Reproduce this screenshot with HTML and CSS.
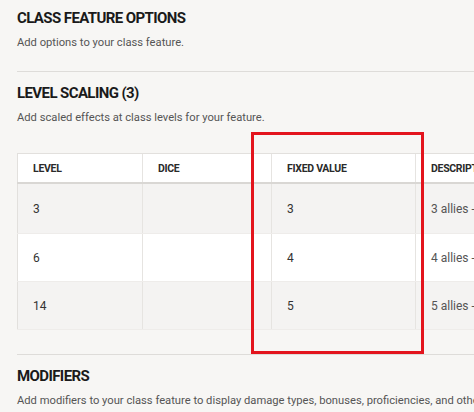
FILE: index.html
```html
<!DOCTYPE html>
<html>
<head>
<meta charset="utf-8">
<link rel="stylesheet" href="styles.css">
</head>
<body>
<div class="page">
  <section class="section first">
    <h2 class="title">CLASS FEATURE OPTIONS</h2>
    <p class="desc">Add options to your class feature.</p>
  </section>
  <section class="section scaling">
    <h2 class="title">LEVEL SCALING (3)</h2>
    <p class="desc">Add scaled effects at class levels for your feature.</p>
    <div class="table-wrap">
      <table class="grid">
        <thead>
          <tr>
            <th class="c1">LEVEL</th>
            <th class="c2">DICE</th>
            <th class="c3">FIXED VALUE</th>
            <th class="c4">DESCRIPTION</th>
          </tr>
        </thead>
        <tbody>
          <tr class="odd"><td>3</td><td></td><td>3</td><td>3 allies - within 30 feet</td></tr>
          <tr class="even"><td>6</td><td></td><td>4</td><td>4 allies - within 30 feet</td></tr>
          <tr class="odd"><td>14</td><td></td><td>5</td><td>5 allies - within 30 feet</td></tr>
        </tbody>
      </table>
      <div class="highlight"></div>
    </div>
  </section>
  <section class="section last">
    <h2 class="title">MODIFIERS</h2>
    <p class="desc">Add modifiers to your class feature to display damage types, bonuses, proficiencies, and other effects.</p>
  </section>
</div>
</body>
</html>
```
FILE: styles.css
```css
html, body {
  margin: 0;
  padding: 0;
}
body {
  background: #f7f6f4;
  font-family: Roboto, "Liberation Sans", sans-serif;
  color: #222;
  overflow: hidden;
  width: 474px;
  height: 412px;
}
.page {
  padding-left: 17px;
}
.section {
  border-bottom: 1px solid #dedcd9;
}
.section.first {
  padding-top: 8px;
  padding-bottom: 20px;
}
.section.scaling {
  padding-top: 11px;
  padding-bottom: 24px;
}
.section.last {
  padding-top: 11px;
  border-bottom: none;
}
.title {
  margin: 0;
  font-size: 15px;
  line-height: 20px;
  font-weight: 700;
  color: #1a1a1a;
  white-space: nowrap;
  letter-spacing: -0.6px;
}
.desc {
  margin: 7px 0 0 0;
  font-size: 11.2px;
  line-height: 16px;
  color: #555;
  white-space: nowrap;
}
.table-wrap {
  position: relative;
  margin-top: 27px;
}
.grid {
  border-collapse: collapse;
  width: 720px;
  table-layout: fixed;
  font-size: 12px;
  color: #333;
}
.grid th, .grid td {
  text-align: left;
  padding: 0 0 0 15px;
  border-left: 1px solid #e6e4e1;
  white-space: nowrap;
}
.grid th {
  background: #fff;
  height: 28px;
  font-size: 10.5px;
  font-weight: 700;
  letter-spacing: -0.3px;
  color: #2a2a2a;
  border-top: 1px solid #e2e0dd;
  border-bottom: 2px solid #d9d7d4;
}
.grid th:first-child, .grid td:first-child {
  border-left: 1px solid #e2e0dd;
}
.c1 { width: 109px; }
.c2 { width: 113px; }
.c3 { width: 128px; }
.c4 { width: 320px; }
.grid td {
  height: 47px;
  border-bottom: 1px solid #eeecea;
}
.grid tbody tr:first-child td {
  height: 49px;
}
.odd td { background: #f4f3f2; }
.even td { background: #fff; }
.grid td:last-child { color: #555; }
.highlight {
  position: absolute;
  left: 234px;
  top: -21px;
  width: 167px;
  height: 216px;
  border: 3.5px solid #e3141d;
  pointer-events: none;
}
```
